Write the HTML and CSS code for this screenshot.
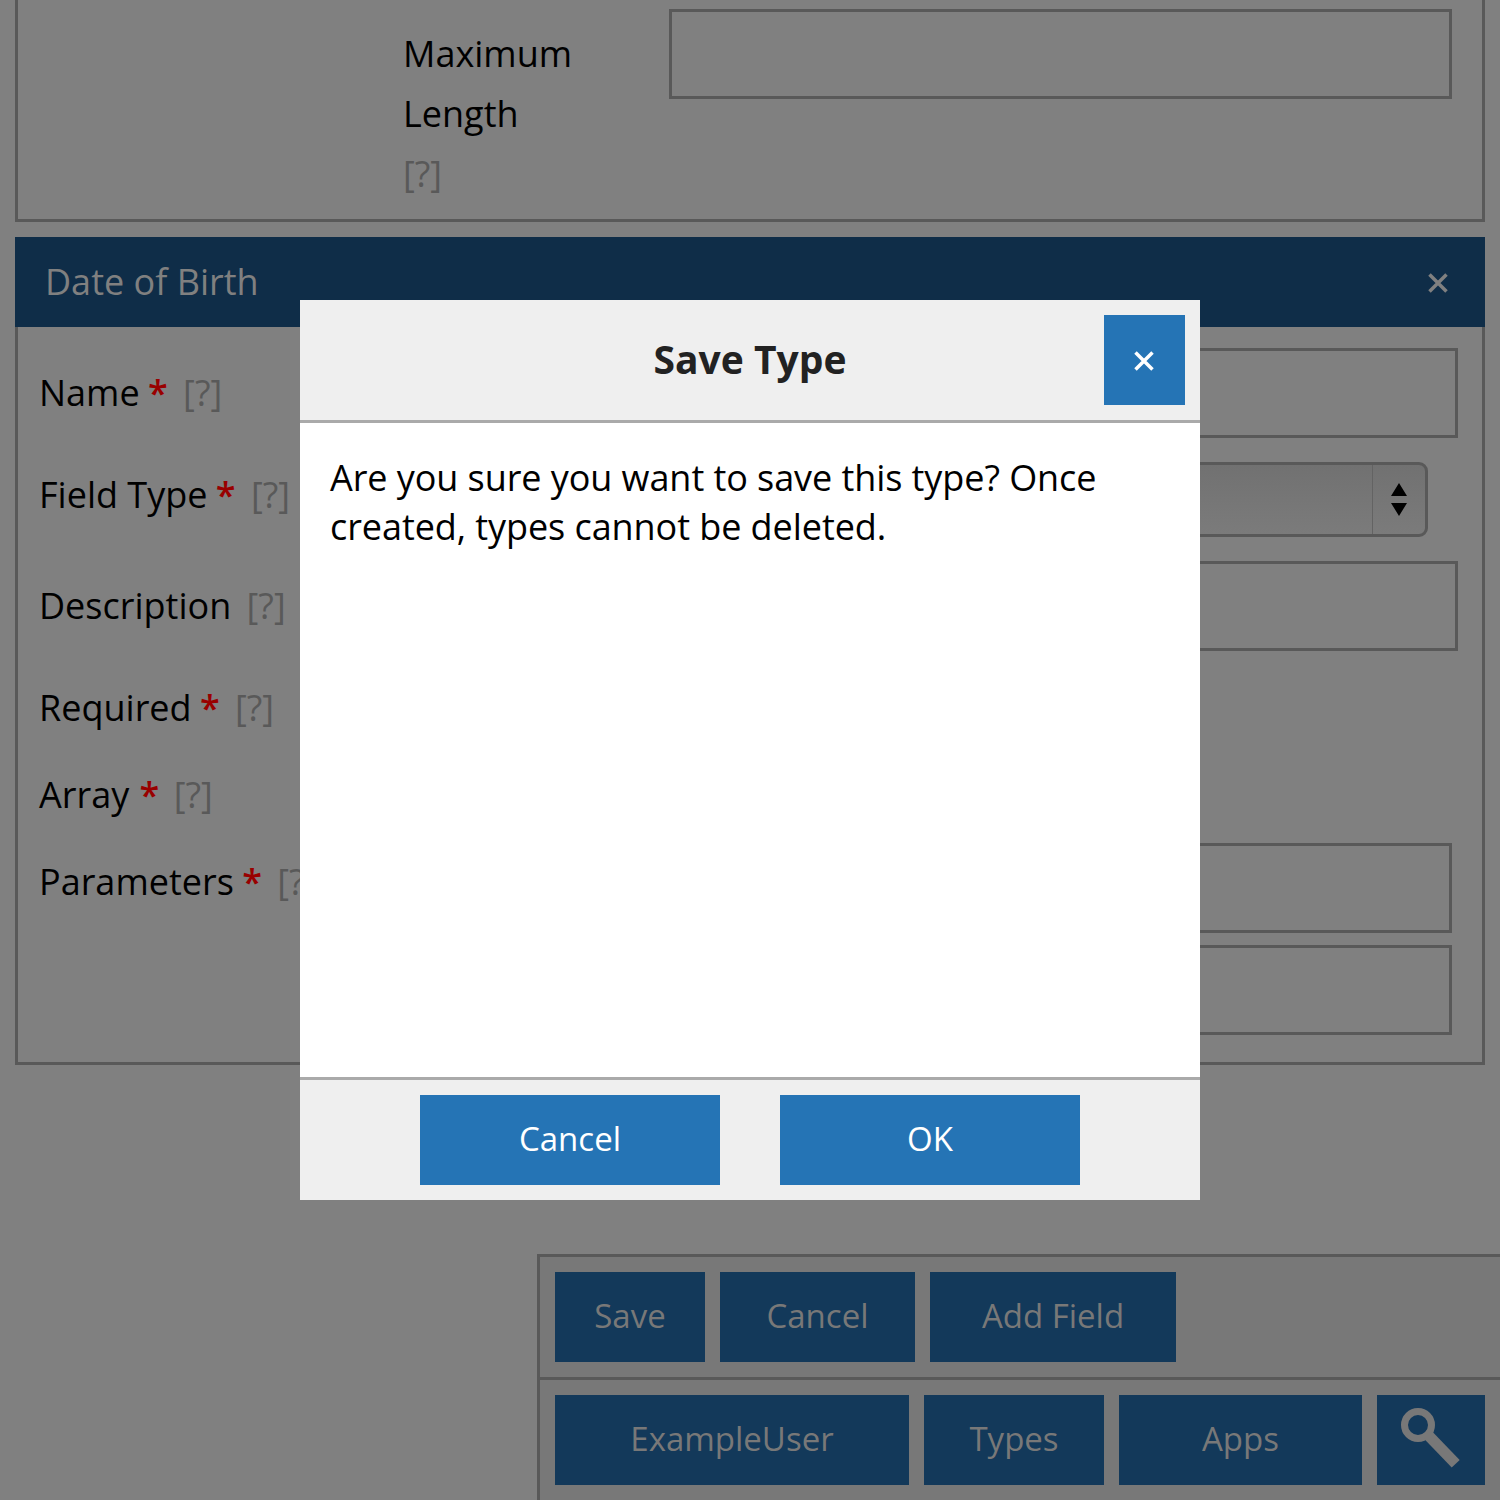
FILE: index.html
```html
<!DOCTYPE html>
<html lang="en">
<head>
<meta charset="UTF-8">
<meta name="viewport" content="width=device-width, initial-scale=1.0">
<title>Save Type</title>
<link rel="stylesheet" href="styles.css">
</head>
<body>
<div class="panel panel-top">
    <div class="label-col">
        <div>Maximum Length</div>
        <div class="help">[?]</div>
    </div>
    <input type="text" class="input input-max">
</div>

<div class="field-head">
    <span>Date of Birth</span>
    <svg class="close-icon" width="20" height="20" viewBox="0 0 20 20"><path d="M1.500 1.500L18.500 18.500M18.500 1.500L1.500 18.500"/></svg>
</div>
<div class="panel panel-field">
    <div class="row row-name">
        <label>Name <span class="req">*</span> <span class="help">[?]</span></label>
        <input type="text" class="input input-wide">
    </div>
    <div class="row row-type">
        <label>Field Type <span class="req">*</span> <span class="help">[?]</span></label>
        <div class="select">
            <div class="select-arrows">
                <svg width="18" height="34" viewBox="0 0 18 34"><path d="M9 0L17 13H1ZM1 20H17L9 33Z"/></svg>
            </div>
        </div>
    </div>
    <div class="row row-desc">
        <label>Description <span class="help">[?]</span></label>
        <input type="text" class="input input-wide">
    </div>
    <div class="row row-required">
        <label>Required <span class="req">*</span> <span class="help">[?]</span></label>
    </div>
    <div class="row row-array">
        <label>Array <span class="req">*</span> <span class="help">[?]</span></label>
    </div>
    <div class="row row-params">
        <label>Parameters <span class="req">*</span> <span class="help">[?]</span></label>
        <input type="text" class="input input-param">
    </div>
    <div class="row row-extra">
        <input type="text" class="input input-param">
    </div>
</div>

<div class="toolbar">
    <div class="toolbar-row">
        <button class="btn btn-save">Save</button>
        <button class="btn btn-cancel">Cancel</button>
        <button class="btn btn-add">Add Field</button>
    </div>
    <div class="toolbar-row">
        <button class="btn btn-user">ExampleUser</button>
        <button class="btn btn-types">Types</button>
        <button class="btn btn-apps">Apps</button>
        <button class="btn btn-search">
            <svg width="108" height="90" viewBox="0 0 108 90"><circle cx="41" cy="30" r="13.500"/><path d="M51 40L78.700 68.800"/></svg>
        </button>
    </div>
</div>

<div class="modal">
    <div class="modal-head">
        <h2>Save Type</h2>
        <button class="modal-close">
            <svg class="close-icon" width="20" height="20" viewBox="0 0 20 20"><path d="M1.500 1.500L18.500 18.500M18.500 1.500L1.500 18.500"/></svg>
        </button>
    </div>
    <div class="modal-body">Are you sure you want to save this type? Once created, types cannot be deleted.</div>
    <div class="modal-foot">
        <button class="modal-btn">Cancel</button>
        <button class="modal-btn">OK</button>
    </div>
</div>
</body>
</html>
```

FILE: styles.css
```css
html, body {
    height: 100%;
}

body {
    margin: 0;
    overflow: hidden;
    background-color: #808080;
    color: #000;
    font-family: "Open Sans", "Noto Sans", sans-serif;
    font-size: 36px;
    line-height: 60px;
}

.panel {
    margin: 0 15px;
    border: 3px solid #595959;
    box-sizing: border-box;
}

.panel-top {
    display: flex;
    height: 222px;
    border-top: none;
    padding: 9px 30px 0 385px;
    margin-bottom: 15px;
}

.label-col {
    width: 266px;
    padding-top: 15px;
}

.help {
    color: #595959;
    margin-left: 6px;
}

.label-col .help {
    margin-left: 0;
}

.req {
    color: #990000;
    font-weight: 600;
    margin-left: -1px;
}

.input {
    display: block;
    height: 90px;
    margin: 0;
    padding: 0;
    border: 3px solid #595959;
    background: transparent;
    box-sizing: border-box;
}

.input-max {
    width: 783px;
}

.field-head {
    display: flex;
    justify-content: space-between;
    align-items: center;
    height: 90px;
    margin: 0 15px;
    padding: 0 37px 0 30px;
    background-color: #0f2d48;
    color: #808080;
}

.field-head .close-icon {
    margin-top: 2px;
}

.close-icon {
    display: block;
    fill: none;
    stroke: #808080;
    stroke-width: 3.500;
}

.panel-field {
    border-top: none;
    height: 738px;
    padding: 21px 24px 0 21px;
}

.row {
    display: flex;
    justify-content: space-between;
    align-items: center;
    margin-bottom: 24px;
}

.row-name, .row-desc {
    height: 90px;
}

.row-type {
    height: 75px;
}

.row-type label {
    margin-top: -10px;
}

.row-required {
    height: 66px;
}

.row-array {
    height: 60px;
    margin-bottom: 18px;
}

.row-array .req {
    margin-left: 1px;
}

.row-array .help {
    margin-left: 5px;
}

.row-params {
    height: 90px;
    margin-bottom: 12px;
}

.row-params label {
    margin-top: -12px;
}

.row-extra {
    height: 90px;
    justify-content: flex-end;
    margin-bottom: 0;
}

.input-wide {
    width: 700px;
}

.input-param {
    width: 700px;
    margin-right: 6px;
}

.select {
    display: flex;
    justify-content: flex-end;
    width: 670px;
    height: 75px;
    margin-right: 30px;
    border: 3px solid #595959;
    border-radius: 9px;
    background: linear-gradient(#717171, #7b7b7b);
    box-sizing: border-box;
}

.select-arrows {
    display: flex;
    align-items: center;
    justify-content: center;
    width: 52px;
    border-left: 1px solid #636363;
}

.select-arrows svg {
    display: block;
    fill: #000;
}

.toolbar {
    margin: 189px 0 0 537px;
    border-left: 3px solid #595959;
    border-top: 3px solid #595959;
    background-color: #787878;
}

.toolbar-row {
    display: flex;
    gap: 15px;
    padding: 15px;
}

.toolbar-row + .toolbar-row {
    border-top: 3px solid #595959;
}

.btn {
    height: 90px;
    padding: 0 0 2px;
    border: none;
    background-color: #13395a;
    color: #787878;
    font: inherit;
    font-size: 33px;
}

.btn-save { width: 150px; }
.btn-cancel { width: 195px; }
.btn-add { width: 246px; }
.btn-user { width: 354px; }
.btn-types { width: 180px; }
.btn-apps { width: 243px; }
.btn-search { width: 108px; padding: 0; }

.btn-search svg {
    display: block;
    fill: none;
    stroke: #787878;
    stroke-width: 7;
}

.btn-search svg path {
    stroke-width: 11;
}

/* dialog over the page */
.modal {
    position: fixed;
    top: 300px;
    left: 300px;
    display: flex;
    flex-direction: column;
    width: 900px;
    height: 900px;
    background-color: #fff;
}

.modal-head {
    position: relative;
    flex: none;
    height: 123px;
    border-bottom: 3px solid #aaa;
    background-color: #efefef;
    box-sizing: border-box;
}

.modal-head h2 {
    margin: 0;
    font-size: 39px;
    line-height: 118px;
    text-align: center;
    color: #222;
}

.modal-close {
    position: absolute;
    top: 15px;
    right: 15px;
    display: flex;
    align-items: center;
    justify-content: center;
    width: 81px;
    height: 90px;
    padding: 2px 2px 0 0;
    border: none;
    background-color: #2574b5;
}

.modal-close .close-icon {
    stroke: #fff;
}

.modal-body {
    flex: 1;
    padding: 30px;
    line-height: 49px;
    letter-spacing: -0.07px;
}

.modal-foot {
    display: flex;
    flex: none;
    justify-content: center;
    gap: 60px;
    height: 123px;
    padding-top: 15px;
    border-top: 3px solid #aaa;
    background-color: #efefef;
    box-sizing: border-box;
}

.modal-btn {
    width: 300px;
    height: 90px;
    padding: 0 0 2px;
    border: none;
    background-color: #2574b5;
    color: #fff;
    font: inherit;
    font-size: 33px;
}
```
